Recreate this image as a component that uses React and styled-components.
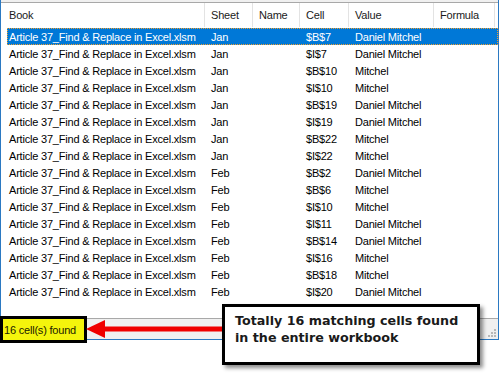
import styled, { createGlobalStyle } from 'styled-components';

const GlobalStyle = createGlobalStyle`
  html, body {
    margin: 0;
    padding: 0;
    background: #ffffff;
  }
  body {
    font-family: "Liberation Sans", Arial, sans-serif;
  }
`;

const results = [
  ['Jan', '$B$7', 'Daniel Mitchel'],
  ['Jan', '$I$7', 'Daniel Mitchel'],
  ['Jan', '$B$10', 'Mitchel'],
  ['Jan', '$I$10', 'Mitchel'],
  ['Jan', '$B$19', 'Daniel Mitchel'],
  ['Jan', '$I$19', 'Daniel Mitchel'],
  ['Jan', '$B$22', 'Mitchel'],
  ['Jan', '$I$22', 'Mitchel'],
  ['Feb', '$B$2', 'Daniel Mitchel'],
  ['Feb', '$B$6', 'Mitchel'],
  ['Feb', '$I$10', 'Mitchel'],
  ['Feb', '$I$11', 'Daniel Mitchel'],
  ['Feb', '$B$14', 'Daniel Mitchel'],
  ['Feb', '$I$16', 'Mitchel'],
  ['Feb', '$B$18', 'Mitchel'],
  ['Feb', '$I$20', 'Daniel Mitchel'],
];

const columns = ['Book', 'Sheet', 'Name', 'Cell', 'Value', 'Formula'];
const BOOK = 'Article 37_Find & Replace in Excel.xlsm';

const Page = styled.div`
  position: relative;
  width: 500px;
  height: 374px;
  overflow: hidden;
  background: #ffffff;
`;

const Frame = styled.div`
  width: 497px;
  padding-top: 2px;
  border-left: 1px solid #2b79c2;
  border-right: 1px solid #2b79c2;
  border-bottom: 1px solid #2b79c2;
  background: #f0f0f0;
`;

const ListView = styled.div`
  height: 315px;
  padding-left: 2px;
  background: #ffffff;
  border-top: 1px solid #a8a8a8;
  border-bottom: 1px solid #a8a8a8;
  font-size: 11px;
  letter-spacing: -0.2px;
  color: #000000;
`;

const Header = styled.div`
  display: grid;
  grid-template-columns: 202px 48px 47px 49px 85px 61px;
  height: 24px;
  margin-bottom: 1px;
`;

const HeaderCell = styled.div`
  display: flex;
  align-items: center;
  padding-left: 6px;
  border-right: 1px solid #e3e3e3;
  color: #1a1a1a;
  white-space: nowrap;
`;

const Row = styled.div`
  display: grid;
  grid-template-columns: 198px 48px 47px 49px 85px 61px;
  height: 17px;
  margin-left: 4px;
  box-sizing: border-box;
  background: ${p => (p.$selected ? '#0078d7' : 'transparent')};
  color: ${p => (p.$selected ? '#ffffff' : '#000000')};
  border: 1px dotted ${p => (p.$selected ? '#f0a030' : 'transparent')};
`;

const Cell = styled.div`
  display: flex;
  align-items: center;
  padding-left: ${p => (p.$first ? 1 : 5)}px;
  white-space: nowrap;
  overflow: hidden;
`;

const StatusBar = styled.div`
  position: relative;
  height: 20px;
  background: #f0f0f0;
  font-size: 11px;
`;

const Grip = styled.svg`
  position: absolute;
  right: 1px;
  bottom: 1px;
`;

const Highlight = styled.div`
  position: absolute;
  left: 0;
  top: 316px;
  width: 87px;
  height: 27px;
  box-sizing: border-box;
  border: 3px solid #000000;
  background: #f4f40c;
  display: flex;
  align-items: center;
  padding-left: 1px;
  font-size: 11px;
  letter-spacing: -0.2px;
  color: #1a1a00;
`;

const Arrow = styled.svg`
  position: absolute;
  left: 84px;
  top: 317px;
`;

const Callout = styled.div`
  position: absolute;
  left: 222px;
  top: 304px;
  width: 258px;
  height: 61px;
  box-sizing: border-box;
  border: 3px solid #000000;
  background: #ffffff;
  box-shadow: 3px 3px 4px rgba(0, 0, 0, 0.45);
  padding: 5px 0 0 10px;
  font-family: "DejaVu Sans", Verdana, sans-serif;
  font-weight: bold;
  font-size: 12.7px;
  line-height: 17px;
  color: #1a1a1a;
  white-space: nowrap;
`;

export default function App() {
  return (
    <Page>
      <GlobalStyle />
      <Frame>
        <ListView>
          <Header>
            {columns.map(c => (
              <HeaderCell key={c}>{c}</HeaderCell>
            ))}
          </Header>
          {results.map(([sheet, cell, value], i) => (
            <Row key={i} $selected={i === 0}>
              <Cell $first>{BOOK}</Cell>
              <Cell>{sheet}</Cell>
              <Cell />
              <Cell>{cell}</Cell>
              <Cell>{value}</Cell>
              <Cell />
            </Row>
          ))}
        </ListView>
        <StatusBar>
          <Grip width="10" height="10" viewBox="0 0 10 10">
            {[[8, 2], [8, 5], [8, 8], [5, 5], [5, 8], [2, 8]].map(([x, y]) => (
              <rect key={`${x}-${y}`} x={x - 1} y={y - 1} width="2" height="2" fill="#b8b8b8" />
            ))}
          </Grip>
        </StatusBar>
      </Frame>
      <Highlight>16 cell(s) found</Highlight>
      <Arrow width="144" height="24" viewBox="0 0 144 24">
        <polygon points="2,12 21,3 21,21" fill="#f00000" />
        <line x1="18" y1="12" x2="140" y2="12" stroke="#f00000" strokeWidth="5" strokeLinecap="round" />
      </Arrow>
      <Callout>
        Totally 16 matching cells found
        <br />
        in the entire workbook
      </Callout>
    </Page>
  );
}
